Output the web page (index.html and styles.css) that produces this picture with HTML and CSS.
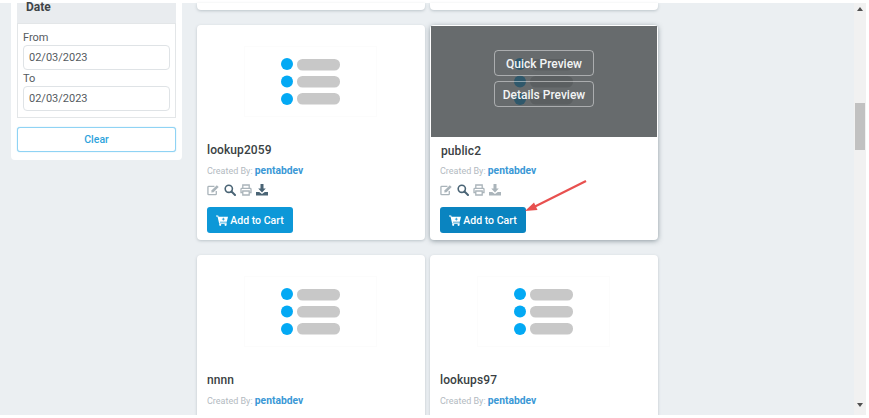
FILE: index.html
```html
<!DOCTYPE html>
<html lang="en">
<head>
<meta charset="utf-8">
<title>Catalog</title>
<link rel="stylesheet" href="styles.css">
</head>
<body>
<div class="frame">
  <div class="page">
    <aside class="sidebar">
      <div class="filter-head">Date</div>
      <div class="filter-box">
        <label class="field-label">From</label>
        <div class="date-input">02/03/2023</div>
        <label class="field-label to">To</label>
        <div class="date-input">02/03/2023</div>
      </div>
      <button class="clear">Clear</button>
    </aside>
    <main class="grid">
      <div class="card stub"></div>
      <div class="card stub"></div>

      <article class="card">
        <div class="thumb"><svg class="ph" viewBox="0 0 133 71"><use href="#ph"/></svg></div>
        <h3 class="title">lookup2059</h3>
        <p class="by"><span class="by-label">Created By:</span> <a class="author">pentabdev</a></p>
        <div class="tools">
          <svg class="ic wide light" viewBox="0 0 14 12"><use href="#i-edit"/></svg>
          <svg class="ic dark" viewBox="0 0 12 12"><use href="#i-search"/></svg>
          <svg class="ic light" viewBox="0 0 12 12"><use href="#i-print"/></svg>
          <svg class="ic dark" viewBox="0 0 12 12"><use href="#i-down"/></svg>
        </div>
        <button class="cart"><svg class="cart-ic" viewBox="0 0 12 11"><use href="#i-cart"/></svg>Add to Cart</button>
      </article>

      <article class="card active">
        <div class="thumb"><svg class="ph" viewBox="0 0 133 71"><use href="#ph"/></svg>
          <div class="overlay">
            <span class="ghost">Quick Preview</span>
            <span class="ghost">Details Preview</span>
          </div>
        </div>
        <h3 class="title">public2</h3>
        <p class="by"><span class="by-label">Created By:</span> <a class="author">pentabdev</a></p>
        <div class="tools">
          <svg class="ic wide light" viewBox="0 0 14 12"><use href="#i-edit"/></svg>
          <svg class="ic dark" viewBox="0 0 12 12"><use href="#i-search"/></svg>
          <svg class="ic light" viewBox="0 0 12 12"><use href="#i-print"/></svg>
          <svg class="ic light" viewBox="0 0 12 12"><use href="#i-down"/></svg>
        </div>
        <button class="cart hover"><svg class="cart-ic" viewBox="0 0 12 11"><use href="#i-cart"/></svg>Add to Cart</button>
      </article>

      <article class="card">
        <div class="thumb"><svg class="ph" viewBox="0 0 133 71"><use href="#ph"/></svg></div>
        <h3 class="title">nnnn</h3>
        <p class="by"><span class="by-label">Created By:</span> <a class="author">pentabdev</a></p>
      </article>

      <article class="card">
        <div class="thumb"><svg class="ph" viewBox="0 0 133 71"><use href="#ph"/></svg></div>
        <h3 class="title">lookups97</h3>
        <p class="by"><span class="by-label">Created By:</span> <a class="author">pentabdev</a></p>
      </article>
    </main>
  </div>
  <div class="scrollbar">
    <span class="arrow up"></span>
    <span class="thumbbar"></span>
    <span class="arrow down"></span>
  </div>
  <svg class="callout" viewBox="0 0 70 40">
    <path d="M62 6 L8 33" stroke="#e8504f" stroke-width="2.2" fill="none"/>
    <path d="M1 36 L10 27.5 L13.5 35 Z" fill="#e8504f"/>
  </svg>
</div>

<svg class="defs" aria-hidden="true">
  <defs>
    <g id="ph">
      <rect x="0.5" y="0.5" width="132" height="70" fill="#fff" stroke="#fcfcfc"/>
      <circle cx="43" cy="18" r="6" fill="#03a9f4"/>
      <circle cx="43" cy="35.5" r="6" fill="#03a9f4"/>
      <circle cx="43" cy="53" r="6" fill="#03a9f4"/>
      <rect x="53" y="13" width="43" height="11.5" rx="5.5" fill="#c8c8c8"/>
      <rect x="53" y="30" width="43" height="11.5" rx="5.5" fill="#c8c8c8"/>
      <rect x="53" y="47" width="43" height="11.5" rx="5.5" fill="#c8c8c8"/>
    </g>
    <g id="i-edit">
      <path d="M10 7v3.2a.8.8 0 0 1-.8.8H1.8a.8.8 0 0 1-.8-.8V3a.8.8 0 0 1 .8-.8H8" fill="none" stroke="currentColor" stroke-width="1.4"/>
      <path d="M5 6.2 10.6 0.8l2 2L7 8.4l-2.4.4z" fill="currentColor"/>
    </g>
    <g id="i-search">
      <circle cx="4.8" cy="4.8" r="3.6" fill="none" stroke="currentColor" stroke-width="1.6"/>
      <path d="M7.5 7.5 11 11" stroke="currentColor" stroke-width="2" stroke-linecap="round"/>
    </g>
    <g id="i-print">
      <path d="M2.8 4.5V1h6.4v3.5M2.8 8.5H1V5.2a.8.8 0 0 1 .8-.8h8.4a.8.8 0 0 1 .8.8v3.3H9.2M2.8 7h6.4v4H2.8z" fill="none" stroke="currentColor" stroke-width="1.3"/>
    </g>
    <g id="i-down">
      <path d="M4.5 0h3v4.5h2.3L6 8.4 2.2 4.5h2.3z" fill="currentColor"/>
      <path d="M0 8h3.2L6 10l2.8-2H12v3.5H0z" fill="currentColor"/>
    </g>
    <g id="i-cart">
      <path d="M0 .4h2.2l.4 1.3H12l-1.2 5H3.9l.2.9h6.6v1.1H3.2L1.5 1.5H0z" fill="currentColor"/>
      <circle cx="4.2" cy="9.8" r="1.1" fill="currentColor"/>
      <circle cx="9.6" cy="9.8" r="1.1" fill="currentColor"/>
      <path d="M6.9 2.7h.8v1h1v.8h-1v1h-.8v-1h-1v-.8h1z" fill="#0d98d8"/>
    </g>
  </defs>
</svg>
</body>
</html>
```

FILE: styles.css
```css
* { box-sizing: border-box; }

html, body {
  margin: 0;
  height: 100%;
  background: #fff;
  overflow: hidden;
}

body {
  font-family: Roboto, "Liberation Sans", sans-serif;
  color: #3f4448;
}

.defs { width: 0; height: 0; position: absolute; }

.frame {
  position: relative;
  height: 415px;
  width: 866px;
  padding-top: 3px;
  display: flex;
  background: linear-gradient(#fff 3px, #ebeff2 3px);
  overflow: hidden;
}

.page {
  flex: 1;
  display: flex;
  align-items: flex-start;
  padding-left: 11px;
  min-width: 0;
}

/* Sidebar */
.sidebar {
  width: 171px;
  flex: none;
  background: #fff;
  border-radius: 0 0 4px 4px;
  padding: 0 6px 8px;
}

.filter-head {
  height: 20px;
  padding: 0 9px;
  background: #e9ecef;
  font-size: 12px;
  font-weight: 700;
  line-height: 8px;
  color: #3f4448;
}

.filter-box {
  height: 95px;
  border: 1px solid #e3e6e8;
  padding: 7px 5px 0;
}

.field-label {
  display: block;
  font-size: 11px;
  line-height: 14px;
  color: #555b60;
}

.field-label.to { margin-top: 2px; }

.date-input {
  height: 25px;
  border: 1px solid #dfe3e6;
  border-radius: 4px;
  padding: 0 5px;
  font-size: 11px;
  line-height: 23px;
  color: #555b60;
  background: #fff;
}

.clear {
  display: block;
  width: 100%;
  height: 25px;
  margin-top: 9px;
  background: #fff;
  border: 1px solid #8fd3f4;
  border-radius: 3px;
  box-shadow: 0 0 1px #7fcbf0;
  color: #2ea3dc;
  font: 500 10.5px Roboto, sans-serif;
}

/* Cards */
.grid {
  margin-left: 15px;
  display: grid;
  grid-template-columns: 228px 228px;
  column-gap: 5px;
  row-gap: 15px;
  align-content: start;
}

.card {
  height: 215px;
  background: #fff;
  border-radius: 4px;
  box-shadow: 0 1px 3px rgba(70, 90, 100, .28);
  padding: 0 10px;
}

.card.stub {
  height: 7px;
  border-radius: 0 0 4px 4px;
}

.card.active {
  box-shadow: 0 1px 5px rgba(50, 70, 80, .5);
}

.thumb {
  position: relative;
  height: 112px;
  margin: 0 -10px;
  display: flex;
  justify-content: center;
  padding: 21px 2px 0 0;
}

.ph {
  width: 133px;
  height: 71px;
  display: block;
}

.overlay {
  position: absolute;
  inset: 1px 1px 0;
  background: rgba(60, 65, 68, .78);
  display: flex;
  flex-direction: column;
  align-items: center;
  padding-top: 24px;
  gap: 5px;
}

.ghost {
  width: 100px;
  height: 26px;
  border: 1px solid rgba(255, 255, 255, .45);
  border-radius: 4px;
  text-align: center;
  font-size: 12px;
  font-weight: 500;
  line-height: 26px;
  color: #f2f4f5;
}

.title {
  margin: 6px 0 0;
  font-size: 12px;
  font-weight: 500;
  line-height: 14px;
  color: #3a3f43;
  letter-spacing: .1px;
}

.active .title { padding-left: 1px; line-height: 16px; margin-bottom: -2px; }

.by {
  margin: 7px 0 0;
  font-size: 9px;
  line-height: 14px;
  white-space: nowrap;
}

.by-label { color: #b3babf; }

.author {
  color: #3a98d6;
  font-weight: 700;
  font-size: 10.3px;
}

.tools {
  display: flex;
  align-items: center;
  gap: 4px;
  height: 12px;
  margin-top: 6px;
}

.ic { width: 12px; height: 12px; display: block; }
.ic.wide { width: 13px; }
.ic.light { color: #aab4ba; }
.ic.dark { color: #4a6475; }

.cart {
  display: flex;
  align-items: center;
  justify-content: center;
  gap: 2px;
  width: 86px;
  height: 26px;
  margin-top: 11px;
  padding: 0;
  border: 0;
  border-radius: 3px;
  background: #0d98d8;
  color: #fff;
  font: 500 10.5px Roboto, sans-serif;
}

.cart.hover { background: #0a84c0; }

.cart-ic { width: 12px; height: 11px; display: block; }

/* Scrollbar */
.scrollbar {
  flex: none;
  width: 12px;
  background: #f1f1f1;
  display: flex;
  flex-direction: column;
  align-items: center;
  padding-top: 4px;
}

.arrow {
  width: 0;
  height: 0;
  border-left: 3px solid transparent;
  border-right: 3px solid transparent;
}

.arrow.up { border-bottom: 4px solid #505050; }
.arrow.down { border-top: 4px solid #505050; margin-top: 253px; }

.thumbbar {
  width: 10px;
  height: 47px;
  margin-top: 92px;
  background: #c1c1c1;
}

/* Annotation */
.callout {
  position: absolute;
  left: 524px;
  top: 175px;
  width: 70px;
  height: 40px;
}
```
